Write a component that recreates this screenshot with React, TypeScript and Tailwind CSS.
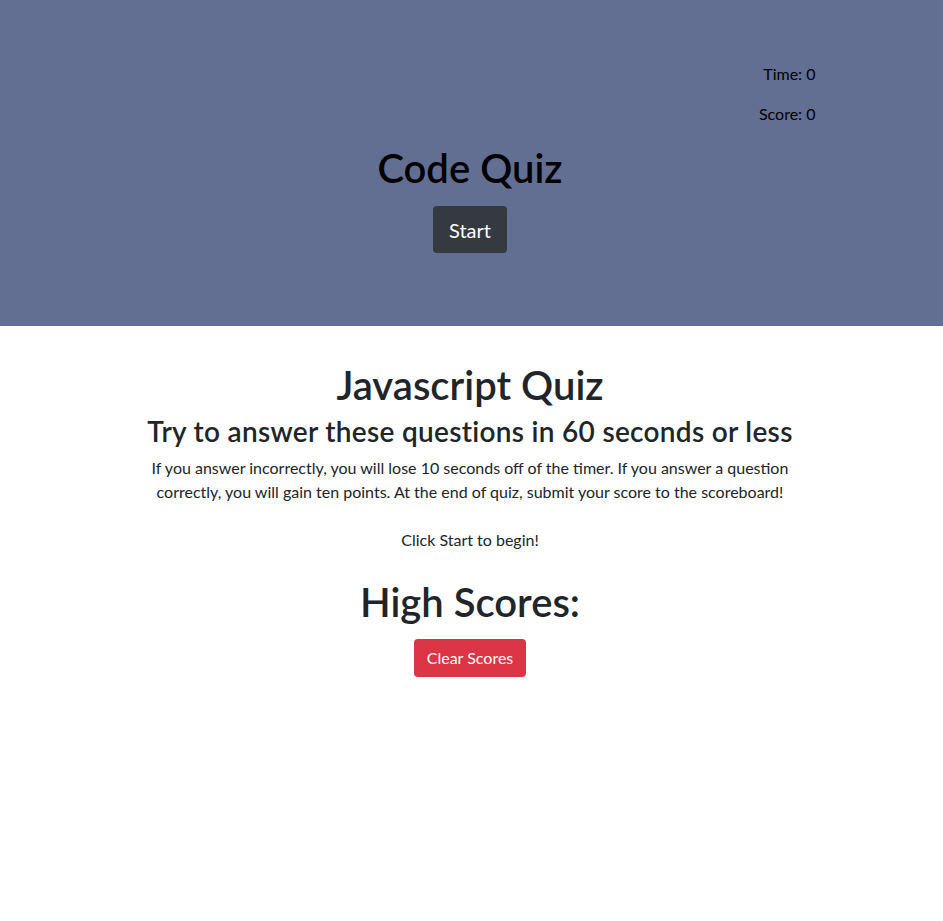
export default function App() {
  return (
    <div className="min-h-[921px] bg-white font-['Lato',sans-serif] text-[#212529]">
      {/* Jumbotron */}
      <header className="h-[326px] bg-[#626f93] pt-[62px]">
        <div className="mx-auto w-[720px] px-[15px] text-black">
          <div className="pr-px text-right text-base leading-6">
            <p className="mb-4">Time: 0</p>
            <p className="mb-4">Score: 0</p>
          </div>
          <div className="flex flex-col items-center pr-[3px]">
            <h1 className="mt-[2px] mb-[14px] text-[40px] font-semibold leading-[48px]">Code Quiz</h1>
            <button className="h-[47px] w-[74px] rounded-[4px] bg-[#343a40] text-xl leading-[30px] text-white">
              Start
            </button>
          </div>
        </div>
      </header>

      {/* Info */}
      <main className="mx-auto w-[720px] pt-[35px] pr-[18px] pl-[15px] text-center">
        <h1 className="mb-[5px] text-[40px] font-semibold leading-[48px]">Javascript Quiz</h1>
        <h3 className="mb-2 text-[28px] font-semibold leading-[34px] tracking-[0.3px]">
          Try to answer these questions in 60 seconds or less
        </h3>
        <p className="mb-[26px] text-base leading-6">
          If you answer incorrectly, you will lose 10 seconds off of the timer. If you answer a question
          <br />
          correctly, you will gain ten points. At the end of quiz, submit your score to the scoreboard!
          <br />
          <br />
          Click Start to begin!
        </p>
        <h1 className="mb-[13px] text-[40px] font-semibold leading-[48px]">High Scores:</h1>
        <button className="h-[38px] w-[112px] rounded-[4px] bg-[#dc3545] text-base leading-6 text-white">
          Clear Scores
        </button>
      </main>
    </div>
  );
}
